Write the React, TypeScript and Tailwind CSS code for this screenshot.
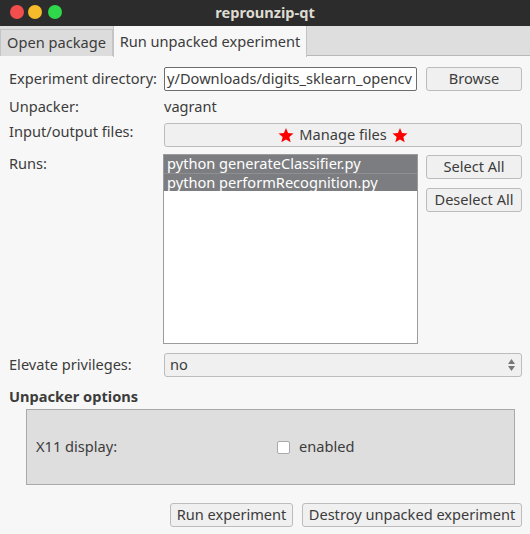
import React from 'react';

const font = { fontFamily: '"Noto Sans", "Open Sans", sans-serif' };

function Star() {
  return (
    <svg width="16" height="16" viewBox="0 0 24 24" className="shrink-0">
      <path
        d="M12 1.5l3.1 7.6 8.2.6-6.3 5.3 2 8-7-4.4-7 4.4 2-8L.7 9.7l8.2-.6z"
        fill="#ff0000"
      />
    </svg>
  );
}

function Button({ children, className = '' }: { children: React.ReactNode; className?: string }) {
  return (
    <div
      className={`flex items-center justify-center h-[24px] rounded-[3px] border border-[#bcbcbc] bg-[#f0f0f0] text-[#3c3c3c] whitespace-nowrap ${className}`}
    >
      {children}
    </div>
  );
}

export default function App() {
  const runs = ['python generateClassifier.py', 'python performRecognition.py'];

  return (
    <div className="w-[530px] h-[534px] bg-[#f7f7f7] text-[#3c3c3c] text-[14.6px] overflow-hidden" style={font}>
      {/* title bar */}
      <div className="relative h-[26px] bg-[#2c2c2c] flex items-center justify-center">
        <div className="absolute left-[10px] top-[5px] flex">
          <div className="w-[14px] h-[14px] rounded-full bg-[#f24e4e]" />
          <div className="ml-[4px] w-[14px] h-[14px] rounded-full bg-[#f6bb2a]" />
          <div className="ml-[6px] w-[14px] h-[14px] rounded-full bg-[#2fd84b]" />
        </div>
        <span className="font-bold text-[#dfdbd2] text-[14.6px]">reprounzip-qt</span>
      </div>

      {/* tabs */}
      <div className="flex h-[30px] bg-[#dedede] border-b border-[#b8b8b8]">
        <div className="mt-[3px] h-[27px] w-[113px] flex items-center justify-center border border-b-0 border-[#c4c4c4] bg-[#dcdcdc]">
          Open package
        </div>
        <div className="h-[31px] w-[194px] flex items-center justify-center border-x border-[#c4c4c4] bg-[#f7f7f7] -mb-px whitespace-nowrap">
          Run unpacked experiment
        </div>
      </div>

      <div className="pl-[9px] pr-[8px] pt-[11px] flex flex-col">
        {/* experiment directory */}
        <div className="flex items-center h-[24px]">
          <span className="w-[155px] shrink-0 whitespace-nowrap">Experiment directory:</span>
          <div className="w-[253px] h-[24px] border border-[#6d6d6d] rounded-[2px] bg-white flex items-center justify-end pr-[4px] overflow-hidden whitespace-nowrap">
            <span>y/Downloads/digits_sklearn_opencv</span>
          </div>
          <Button className="ml-[9px] flex-1">Browse</Button>
        </div>

        {/* unpacker */}
        <div className="flex items-center h-[17px] mt-[7px]">
          <span className="w-[155px] shrink-0">Unpacker:</span>
          <span>vagrant</span>
        </div>

        {/* input/output */}
        <div className="flex items-center h-[23px] mt-[8px]">
          <span className="w-[155px] shrink-0 self-start leading-[16px]">Input/output files:</span>
          <Button className="flex-1 h-[23px] gap-[5px]">
            <Star />
            <span>Manage files</span>
            <Star />
          </Button>
        </div>

        {/* runs */}
        <div className="flex mt-[8px]">
          <span className="w-[154px] shrink-0 leading-[18px]">Runs:</span>
          <div className="w-[255px] h-[190px] border border-[#9c9c9c] bg-white flex flex-col">
            {runs.map((r, i) => (
              <div
                key={r}
                className={`h-[18px] px-[3px] flex items-center bg-[#7c7d80] text-white whitespace-nowrap ${i > 0 ? 'border-t border-[#8e8f92]' : ''}`}
              >
                {r}
              </div>
            ))}
          </div>
          <div className="ml-[8px] flex-1 flex flex-col gap-[9px] pt-[1px]">
            <Button className="h-[23px]">Select All</Button>
            <Button className="h-[23px]">Deselect All</Button>
          </div>
        </div>

        {/* elevate */}
        <div className="flex items-center h-[24px] mt-[9px]">
          <span className="w-[155px] shrink-0">Elevate privileges:</span>
          <div className="flex-1 h-[24px] rounded-[3px] border border-[#bcbcbc] bg-[#f0f0f0] flex items-center justify-between pl-[5px] pr-[6px]">
            <span>no</span>
            <div className="flex flex-col items-center gap-[2px] text-[#777]">
              <svg width="7" height="5" viewBox="0 0 7 5"><path d="M3.5 0L7 5H0z" fill="currentColor" /></svg>
              <svg width="7" height="5" viewBox="0 0 7 5"><path d="M0 0h7L3.5 5z" fill="currentColor" /></svg>
            </div>
          </div>
        </div>

        {/* unpacker options */}
        <div className="mt-[9px] font-bold leading-[20px]">Unpacker options</div>

        <div className="ml-[17px] mr-[7px] mt-[3px] h-[76px] bg-[#dedede] border border-[#a9a9a9] flex items-center px-[9px]">
          <span className="w-[241px] shrink-0">X11 display:</span>
          <div className="w-[13px] h-[13px] rounded-[2px] border border-[#a9a9a9] bg-white" />
          <span className="ml-[9px]">enabled</span>
        </div>

        {/* actions */}
        <div className="flex justify-end gap-[9px] mt-[18px]">
          <Button className="w-[123px] h-[24px]">Run experiment</Button>
          <Button className="w-[220px] h-[24px]">Destroy unpacked experiment</Button>
        </div>
      </div>
    </div>
  );
}
